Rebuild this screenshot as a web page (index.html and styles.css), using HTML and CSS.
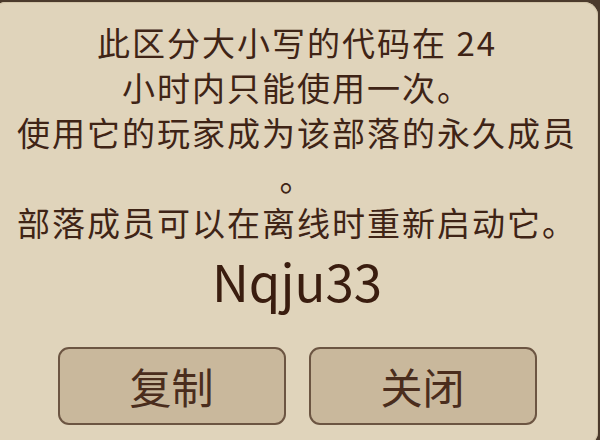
FILE: index.html
```html
<!DOCTYPE html>
<html lang="zh-CN">
<head>
<meta charset="utf-8">
<title>代码</title>
<link rel="stylesheet" href="styles.css">
</head>
<body>
<div class="panel">
  <div class="message">
    <div class="line">此区分大小写的代码在 24</div>
    <div class="line">小时内只能使用一次。</div>
    <div class="line">使用它的玩家成为该部落的永久成员</div>
    <div class="line">。</div>
    <div class="line">部落成员可以在离线时重新启动它。</div>
  </div>
  <div class="code">Nqju33</div>
  <div class="actions">
    <button class="btn">复制</button>
    <button class="btn">关闭</button>
  </div>
</div>
</body>
</html>
```

FILE: styles.css
```css
html, body {
  margin: 0;
  padding: 0;
  width: 600px;
  height: 440px;
  overflow: hidden;
  background: #4b3a2c;
}

.panel {
  box-sizing: border-box;
  margin: 2px 0 0 -8px;
  width: 606px;
  height: 444px;
  border-radius: 14px;
  background: #e0d4bb;
  box-shadow: inset 0 0 0 1px #d2c4a8;
  padding: 18px 12px 0 16px;
  display: flex;
  flex-direction: column;
  align-items: center;
  font-family: "Noto Sans CJK SC", "Noto Sans", sans-serif;
  color: #3f2416;
}

.message {
  display: flex;
  flex-direction: column;
  align-items: center;
}

.line {
  font-size: 33px;
  line-height: 45px;
  letter-spacing: 2px;
  white-space: nowrap;
}

.code {
  margin-top: 5px;
  font-size: 51px;
  line-height: 60px;
  font-weight: 400;
  color: #3a1d0f;
}

.actions {
  margin-top: 37px;
  display: flex;
  gap: 23px;
}

.btn {
  box-sizing: border-box;
  width: 228px;
  height: 78px;
  border: 2px solid #6c5542;
  border-radius: 11px;
  background: #c9b89c;
  font-family: "Noto Sans CJK SC", "Noto Sans", sans-serif;
  font-size: 42px;
  color: #4a2d1d;
  letter-spacing: 0;
  padding: 0;
  line-height: 1;
}
```
